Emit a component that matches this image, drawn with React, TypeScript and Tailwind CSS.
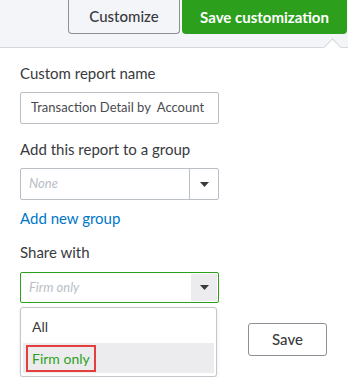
function Caret() {
  return (
    <svg width="9" height="5" viewBox="0 0 9 5" className="fill-[#393a3d]">
      <path d="M0 0h9L4.5 5z" />
    </svg>
  );
}

export default function App() {
  return (
    <div className="relative h-[377px] w-[348px] overflow-hidden bg-white text-[#393a3d] font-['Lato',sans-serif]">
      <div className="relative flex h-[48px] justify-end gap-[2px] border-b border-[#d4d7dc] bg-[#f4f5f8] pr-[1px]">
        <button className="h-[34px] w-[112px] rounded-b-[4px] border border-t-0 border-[#8d9096] bg-[#f4f5f8] text-[15px] font-medium text-[#393a3d]">
          Customize
        </button>
        <button className="h-[34px] w-[165px] rounded-b-[4px] bg-[#2ca01c] text-[15px] font-bold text-white">
          Save customization
        </button>
        <div className="absolute bottom-[-7px] right-[9px] h-[13px] w-[13px] rotate-45 border-l border-t border-[#d4d7dc] bg-white" />
      </div>

      <div className="px-5 pt-[15px]">
        <p className="text-[15px] leading-5">Custom report name</p>
        <div className="mt-[9px] flex h-[32px] w-[199px] items-center rounded-[2px] border border-[#babec5] px-[10px] text-[13px] text-[#4a4b50]">
          Transaction Detail by&nbsp; Account
        </div>

        <p className="mt-[15px] text-[15px] leading-5">Add this report to a group</p>
        <div className="mt-[9px] flex h-[32px] w-[199px] rounded-[2px] border border-[#babec5]">
          <span className="flex flex-1 items-center px-2 text-[13px] italic text-[#babec5]">None</span>
          <span className="flex w-[29px] items-center justify-center border-l border-[#babec5]">
            <Caret />
          </span>
        </div>

        <p className="mt-[8px] text-[15px] leading-5 text-[#0077c5]">Add new group</p>

        <p className="mt-[14px] text-[15px] leading-5">Share with</p>
        <div className="relative mt-[10px] w-[199px]">
          <div className="flex h-[31px] rounded-[2px] border border-[#2ca01c]">
            <span className="flex flex-1 items-center px-2 text-[13px] italic text-[#babec5]">Firm only</span>
            <span className="m-[1px] flex w-[26px] items-center justify-center bg-[#ececee]">
              <Caret />
            </span>
          </div>
          <div className="absolute left-0 top-[35px] z-10 w-[197px] rounded-[3px] border border-[#c4c6cb] bg-white px-[2px] pt-[2px] pb-[3px] shadow-sm">
            <div className="flex h-[33px] items-center px-[9px] text-[14px] text-[#393a3d]">All</div>
            <div className="flex h-[30px] items-center bg-[#ececee] px-[3px]">
              <span className="border-2 border-[#e53e3e] px-[4px] py-[2px] text-[14px] leading-[19px] text-[#2ca01c]">
                Firm only
              </span>
            </div>
          </div>
        </div>

        <div className="mt-[20px] flex justify-end pr-[1px]">
          <button className="h-[33px] w-[79px] rounded-[3px] border border-[#8d9096] bg-white text-[15px] font-medium text-[#393a3d]">
            Save
          </button>
        </div>
      </div>
    </div>
  );
}
